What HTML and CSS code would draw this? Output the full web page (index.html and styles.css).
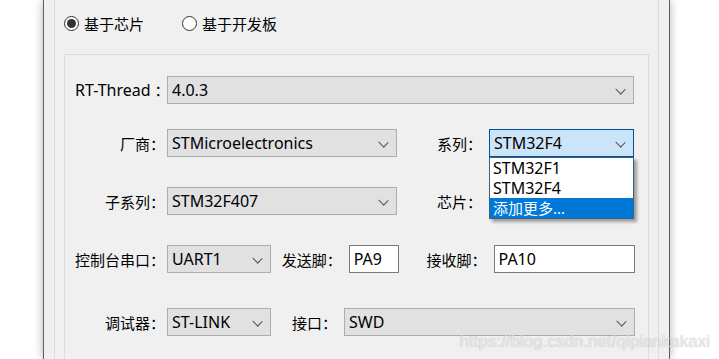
FILE: index.html
```html
<html lang="zh-CN">
<head>
  <meta charset="UTF-8">
  <title>新建项目</title>
  <link rel="stylesheet" href="styles.css">
</head>
<body>

<div class="window">
  <div class="outer">

    <div class="modes">
      <label class="radio checked"><span class="dot"></span>基于芯片</label>
      <label class="radio"><span class="dot"></span>基于开发板</label>
    </div>

    <div class="panel">
      <div class="row r1">
        <span class="lbl"><span class="latin">RT-Thread</span> ：</span>
        <div class="combo w-full">4.0.3<span class="chev"></span></div>
      </div>

      <div class="row r2">
        <span class="lbl">厂商：</span>
        <div class="combo w-mid">STMicroelectronics<span class="chev"></span></div>
        <span class="lbl2 sp-40">系列：</span>
        <div class="combo focus w-side">STM32F4<span class="chev"></span>
          <ul class="list">
            <li>STM32F1</li>
            <li>STM32F4</li>
            <li class="hl">添加更多...</li>
          </ul>
        </div>
      </div>

      <div class="row r3">
        <span class="lbl">子系列：</span>
        <div class="combo w-mid">STM32F407<span class="chev"></span></div>
        <span class="lbl2 sp-40">芯片：</span>
        <div class="combo w-side"><span class="chev"></span></div>
      </div>

      <div class="row r4">
        <span class="lbl">控制台串口：</span>
        <div class="combo w-small">UART1<span class="chev"></span></div>
        <span class="lbl2 sp-11">发送脚：</span>
        <div class="field w-pin">PA9</div>
        <span class="lbl2 sp-28">接收脚：</span>
        <div class="field w-pin2">PA10</div>
      </div>

      <div class="row r5">
        <span class="lbl">调试器：</span>
        <div class="combo w-small">ST-LINK<span class="chev"></span></div>
        <span class="lbl2 sp-21">接口：</span>
        <div class="combo w-rest">SWD<span class="chev"></span></div>
      </div>
    </div>

  </div>
</div>

<div class="watermark">https://blog.csdn.net/qipiankakaxi</div>

</body>
</html>
```

FILE: styles.css
```css
body {
  margin: 0;
  height: 359px;
  overflow: hidden;
  background: #fff;
  font-family: "Noto Sans", "Noto Sans CJK SC", sans-serif;
  font-size: 15px;
  color: #000;
}

.window {
  margin-left: 43px;
  width: 627px;
  height: 359px;
  box-sizing: border-box;
  padding: 0 10px;
  background: #f0f0f0;
  border-left: 1px solid #5e5e5e;
  border-right: 1px solid #5e5e5e;
  box-shadow: 0 0 9px rgba(0,0,0,0.3);
}

.outer {
  height: 100%;
  border-left: 1px solid #dcdcdc;
  border-right: 1px solid #dcdcdc;
}

.modes {
  height: 54px;
  box-sizing: border-box;
  padding: 13px 0 0 9px;
  display: flex;
}

.radio {
  display: flex;
  align-items: center;
  height: 21px;
  width: 118px;
}

.dot {
  width: 13px;
  height: 13px;
  border: 1px solid #333;
  border-radius: 50%;
  background: #fff;
  margin-right: 5px;
  position: relative;
}

.radio.checked .dot::after {
  content: "";
  position: absolute;
  left: 2px;
  top: 2px;
  width: 9px;
  height: 9px;
  border-radius: 50%;
  background: #333;
}

.panel {
  margin: 0 9px;
  height: 305px;
  box-sizing: border-box;
  border: 1px solid #dcdcdc;
  border-bottom: none;
  padding: 21px 13px 0 10px;
}

.row {
  display: flex;
  align-items: center;
  height: 28px;
}

.r2 { margin-top: 25px; }
.r3 { margin-top: 30px; }
.r4 { margin-top: 30px; }
.r5 { margin-top: 35px; }

.lbl {
  width: 90px;
  margin-right: 2px;
  text-align: right;
  white-space: nowrap;
}

.latin {
  font-size: 16px;
}

.lbl2 {
  margin-right: 7px;
  white-space: nowrap;
}

.sp-40 { margin-left: 40px; }
.sp-11 { margin-left: 11px; }
.sp-28 { margin-left: 28px; }
.sp-21 { margin-left: 21px; }

.combo, .field {
  position: relative;
  height: 28px;
  box-sizing: border-box;
  line-height: 26px;
  padding-left: 4px;
  font-size: 16px;
  white-space: nowrap;
}

.combo {
  background: #e1e1e1;
  border: 1px solid #adadad;
}

.combo.focus {
  background: #cce4f7;
  border-color: #005499;
}

.field {
  background: #fff;
  border: 1px solid #7a7a7a;
}

.w-full { width: 467px; }
.w-mid { width: 230px; }
.w-side { width: 145px; }
.w-small { width: 104px; }
.w-pin { width: 50px; }
.w-pin2 { width: 142px; }
.w-rest { width: 291px; }

.chev {
  position: absolute;
  right: 9px;
  top: 9px;
  width: 6px;
  height: 6px;
  border-right: 1px solid #555;
  border-bottom: 1px solid #555;
  transform: rotate(45deg) scaleX(1.1);
}

.list {
  position: absolute;
  left: -1px;
  top: 27px;
  width: 145px;
  box-sizing: border-box;
  margin: 0;
  padding: 0;
  list-style: none;
  background: #fff;
  border: 1px solid #3b5f82;
  box-shadow: 3px 3px 3px rgba(0,0,0,0.35);
  font-size: 16px;
  z-index: 5;
}

.list li {
  height: 20px;
  line-height: 20px;
  padding-left: 3px;
}

.list li.hl {
  background: #0078d7;
  color: #fff;
  font-size: 15px;
}

.watermark {
  position: absolute;
  right: 9px;
  top: 332px;
  font-family: "Liberation Sans", Arial, sans-serif;
  font-size: 17px;
  color: rgba(255,255,255,0.75);
  text-shadow: 0 0 1px rgba(0,0,0,0.35);
}
```
